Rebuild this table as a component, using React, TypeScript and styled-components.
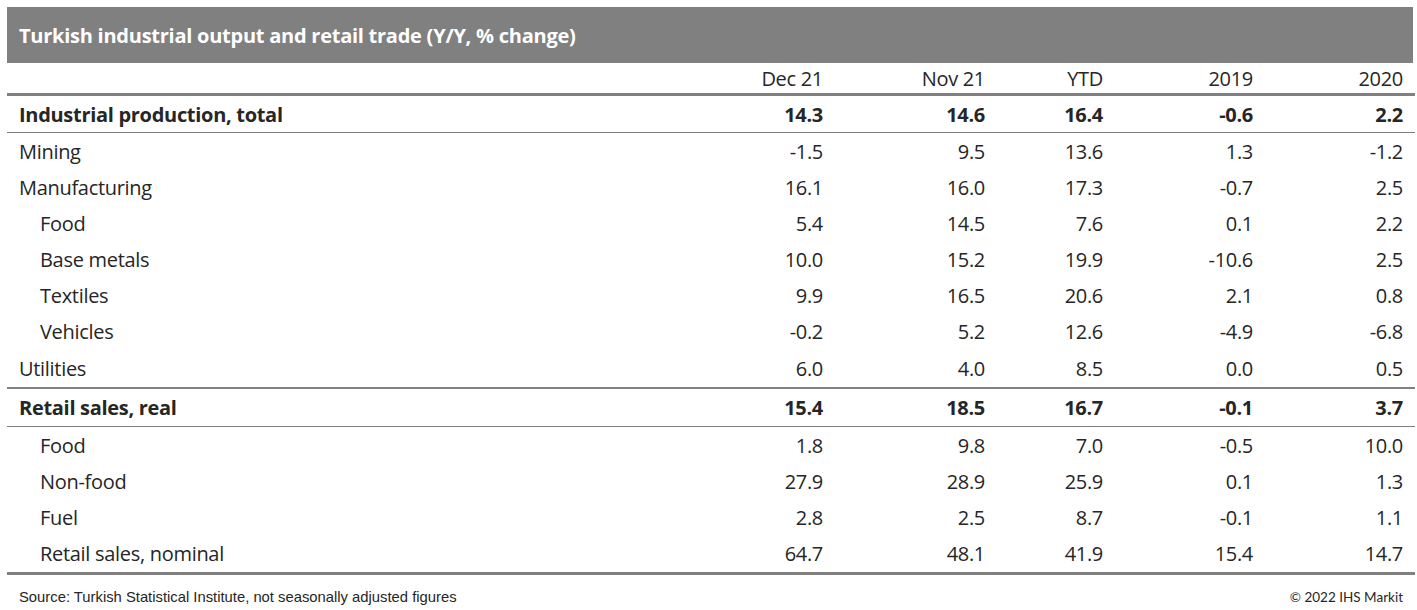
import React from 'react';
import styled, { createGlobalStyle } from 'styled-components';

const GlobalStyle = createGlobalStyle`
  html, body {
    margin: 0;
    padding: 0;
    background: #ffffff;
  }
`;

const Page = styled.div`
  padding: 7px 4px 0 7px;
  font-family: "Open Sans", Lato, sans-serif;
  color: #262626;
`;

const TitleBar = styled.div`
  height: 56px;
  display: flex;
  align-items: center;
  padding-left: 12px;
  background: #808080;
  color: #ffffff;
  font-size: 20px;
  font-weight: 700;
  letter-spacing: -0.25px;
`;

const Table = styled.div`
  display: grid;
  grid-template-columns: 666px 150px 162px 118px 150px 150px 10px;
`;

const Row = styled.div<{ $h: number; $top?: number; $bottom?: number }>`
  display: contents;

  > div {
    height: ${p => p.$h}px;
    border-top: ${p => (p.$top ? `${p.$top}px solid #808080` : 'none')};
    border-bottom: ${p => (p.$bottom ? `${p.$bottom}px solid #808080` : 'none')};
  }
`;

const Cell = styled.div<{ $bold?: boolean; $indent?: boolean; $right?: boolean }>`
  display: flex;
  align-items: center;
  justify-content: ${p => (p.$right ? 'flex-end' : 'flex-start')};
  padding-left: ${p => (p.$right ? 0 : p.$indent ? 33 : 12)}px;
  font-size: 20px;
  font-weight: ${p => (p.$bold ? 700 : 400)};
  letter-spacing: -0.3px;
  white-space: nowrap;
`;

const Footer = styled.div`
  display: flex;
  justify-content: space-between;
  align-items: center;
  height: 44px;
  padding: 0 10px 0 12px;
`;

const Source = styled.span`
  font-family: "Liberation Sans", Arial, sans-serif;
  font-size: 14.8px;
`;

const Copy = styled.span`
  font-family: Lato, sans-serif;
  font-size: 13.5px;
`;

type Line = {
  label: string;
  values: string[];
  kind: 'section' | 'item' | 'sub';
  h?: number;
  top?: number;
  bottom?: number;
};

const lines: Line[] = [
  { label: 'Industrial production, total', values: ['14.3', '14.6', '16.4', '-0.6', '2.2'], kind: 'section', bottom: 1 },
  { label: 'Mining', values: ['-1.5', '9.5', '13.6', '1.3', '-1.2'], kind: 'item' },
  { label: 'Manufacturing', values: ['16.1', '16.0', '17.3', '-0.7', '2.5'], kind: 'item' },
  { label: 'Food', values: ['5.4', '14.5', '7.6', '0.1', '2.2'], kind: 'sub' },
  { label: 'Base metals', values: ['10.0', '15.2', '19.9', '-10.6', '2.5'], kind: 'sub' },
  { label: 'Textiles', values: ['9.9', '16.5', '20.6', '2.1', '0.8'], kind: 'sub' },
  { label: 'Vehicles', values: ['-0.2', '5.2', '12.6', '-4.9', '-6.8'], kind: 'sub' },
  { label: 'Utilities', values: ['6.0', '4.0', '8.5', '0.0', '0.5'], kind: 'item', h: 38 },
  { label: 'Retail sales, real', values: ['15.4', '18.5', '16.7', '-0.1', '3.7'], kind: 'section', h: 37, top: 2, bottom: 1 },
  { label: 'Food', values: ['1.8', '9.8', '7.0', '-0.5', '10.0'], kind: 'sub' },
  { label: 'Non-food', values: ['27.9', '28.9', '25.9', '0.1', '1.3'], kind: 'sub' },
  { label: 'Fuel', values: ['2.8', '2.5', '8.7', '-0.1', '1.1'], kind: 'sub' },
  { label: 'Retail sales, nominal', values: ['64.7', '48.1', '41.9', '15.4', '14.7'], kind: 'sub', h: 37, bottom: 3 },
];

const columns = ['Dec 21', 'Nov 21', 'YTD', '2019', '2020'];

export default function App() {
  return (
    <Page>
      <GlobalStyle />
      <TitleBar>Turkish industrial output and retail trade (Y/Y, % change)</TitleBar>
      <Table>
        <Row $h={30} $bottom={3}>
          <Cell />
          {columns.map(c => (
            <Cell key={c} $right>{c}</Cell>
          ))}
          <Cell />
        </Row>
        {lines.map((l, i) => (
          <Row key={i} $h={l.h ?? 36} $top={l.top} $bottom={l.bottom}>
            <Cell $bold={l.kind === 'section'} $indent={l.kind === 'sub'}>{l.label}</Cell>
            {l.values.map((v, j) => (
              <Cell key={j} $right $bold={l.kind === 'section'}>{v}</Cell>
            ))}
            <Cell />
          </Row>
        ))}
      </Table>
      <Footer>
        <Source>Source: Turkish Statistical Institute, not seasonally adjusted figures</Source>
        <Copy>© 2022 IHS Markit</Copy>
      </Footer>
    </Page>
  );
}
